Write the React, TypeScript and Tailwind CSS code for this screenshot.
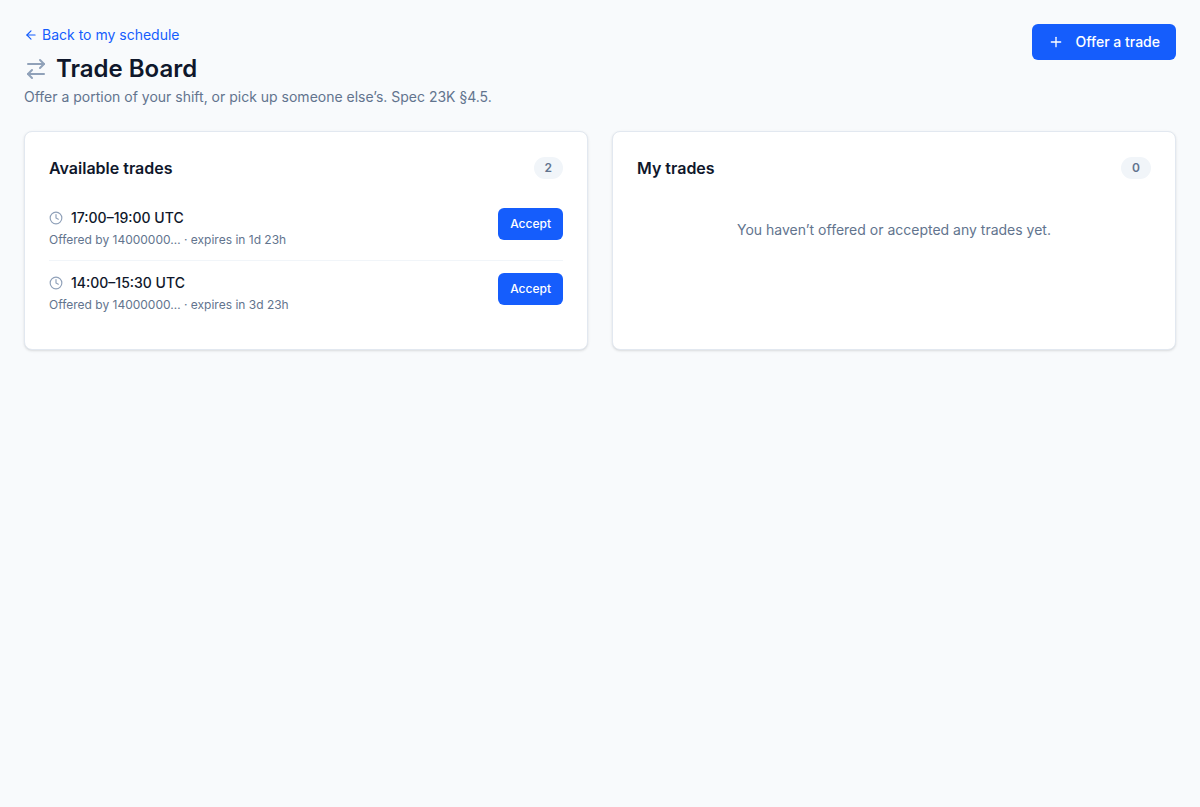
import React from "react";
import { ArrowLeft, ArrowRightLeft, Clock, Plus } from "lucide-react";

type Trade = { id: string; time: string; detail: string };

const available: Trade[] = [
  { id: "a", time: "17:00–19:00 UTC", detail: "Offered by 14000000… · expires in 1d 23h" },
  { id: "b", time: "14:00–15:30 UTC", detail: "Offered by 14000000… · expires in 3d 23h" },
];

function Card({ title, count, children }: { title: string; count: number; children: React.ReactNode }) {
  return (
    <section className="rounded-lg border border-slate-200 bg-white p-6 shadow-sm">
      <div className="flex items-center justify-between">
        <h2 className="text-base font-semibold">{title}</h2>
        <span className="rounded-full border border-transparent bg-slate-100 px-2.5 py-0.5 text-xs font-semibold text-slate-500">
          {count}
        </span>
      </div>
      <div className="mt-4">{children}</div>
    </section>
  );
}

export default function App() {
  return (
    <div className="min-h-screen bg-slate-50 p-6 font-['Inter',sans-serif] text-slate-900 antialiased">
      <header className="flex items-start justify-between">
        <div>
          <a href="#schedule" className="flex items-center gap-1 text-sm leading-[21px] text-blue-600">
            <ArrowLeft className="size-3.5" />
            Back to my schedule
          </a>
          <h1 className="mt-2 flex items-center gap-2 text-2xl font-semibold">
            <ArrowRightLeft className="size-6 text-slate-400" />
            Trade Board
          </h1>
          <p className="mt-0.5 text-sm text-slate-500">
            Offer a portion of your shift, or pick up someone else’s. Spec 23K §4.5.
          </p>
        </div>
        <button type="button" className="flex h-9 items-center gap-3 rounded-md bg-blue-600 px-4 text-sm font-medium text-white">
          <Plus className="size-4" />
          Offer a trade
        </button>
      </header>
      <main className="mt-6 grid grid-cols-1 gap-6 md:grid-cols-2">
        <Card title="Available trades" count={available.length}>
          <ul className="divide-y divide-slate-100">
            {available.map((trade) => (
              <li key={trade.id} className="flex items-start justify-between py-3">
                <div>
                  <p className="flex items-center gap-2 text-sm font-medium">
                    <Clock className="size-3.5 text-slate-400" />
                    {trade.time}
                  </p>
                  <p className="mt-1 text-xs text-slate-500">{trade.detail}</p>
                </div>
                <button type="button" className="h-8 rounded-md bg-blue-600 px-3 text-xs font-medium text-white">
                  Accept
                </button>
              </li>
            ))}
          </ul>
        </Card>
        <Card title="My trades" count={0}>
          <p className="py-6 text-center text-sm text-slate-500">You haven’t offered or accepted any trades yet.</p>
        </Card>
      </main>
    </div>
  );
}
